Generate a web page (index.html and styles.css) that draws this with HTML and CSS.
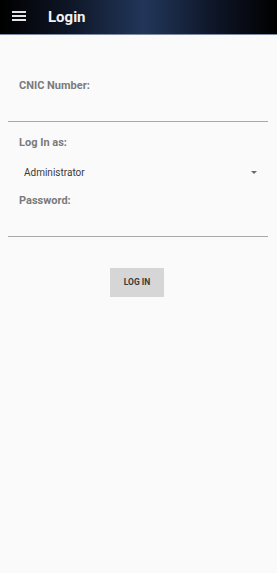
FILE: index.html
```html
<!DOCTYPE html>
<html>
<head>
<meta charset="utf-8">
<title>Login</title>
<link rel="stylesheet" href="styles.css">
</head>
<body>
<div class="top_bar">
    <a href="javascript:;" class="menu"><span></span><span></span><span></span></a>
    <h1>Login</h1>
</div>
<div class="form">
    <div class="lab lab_cnic">CNIC Number:</div>
    <div class="inp"></div>
    <div class="lab lab_as">Log In as:</div>
    <div class="spin">
        <span>Administrator</span>
        <i class="arrow"></i>
    </div>
    <div class="lab lab_pwd">Password:</div>
    <div class="inp"></div>
    <a href="javascript:;" class="btn">LOG IN</a>
</div>
</body>
</html>
```
FILE: styles.css
```css
*{margin:0;padding:0;}
body{background:#fafafa;font-family:Roboto,"Liberation Sans",sans-serif;width:277px;height:573px;overflow:hidden;}
.top_bar{height:34px;border-bottom:1px solid #7d8ba3;background:linear-gradient(90deg,#000 0%,#0c1321 22%,#22365a 52%,#0d1526 78%,#000 100%);display:flex;align-items:center;}
.top_bar .menu{display:flex;flex-direction:column;gap:2px;width:14px;margin-left:12px;margin-top:-2px;}
.top_bar .menu span{display:block;height:2px;background:#e4e4e4;}
.top_bar h1{color:#f2f2f2;font-size:15px;font-weight:700;margin-left:22px;line-height:18px;margin-top:-1px;}
.form{padding:0 9px 0 8px;}
.lab{font-size:11px;line-height:13px;font-weight:700;color:#7a7a7a;padding-left:11px;}
.lab_cnic{margin-top:44px;}
.inp{height:29px;border-bottom:1px solid #a9a9a9;}
.lab_as{margin-top:14px;}
.spin{display:flex;align-items:center;justify-content:space-between;margin-top:16px;height:14px;padding-left:16px;padding-right:11px;}
.spin span{font-size:10px;color:#3a3a3a;}
.spin .arrow{width:0;height:0;border-left:3px solid transparent;border-right:3px solid transparent;border-top:3px solid #6a6a6a;}
.lab_pwd{margin-top:15px;}
.btn{display:block;width:54px;height:29px;line-height:29px;margin:31px auto 0;background:#d6d6d6;color:#3a3a3a;font-size:8.5px;font-weight:700;text-align:center;text-decoration:none;position:relative;left:-1px;}
```
